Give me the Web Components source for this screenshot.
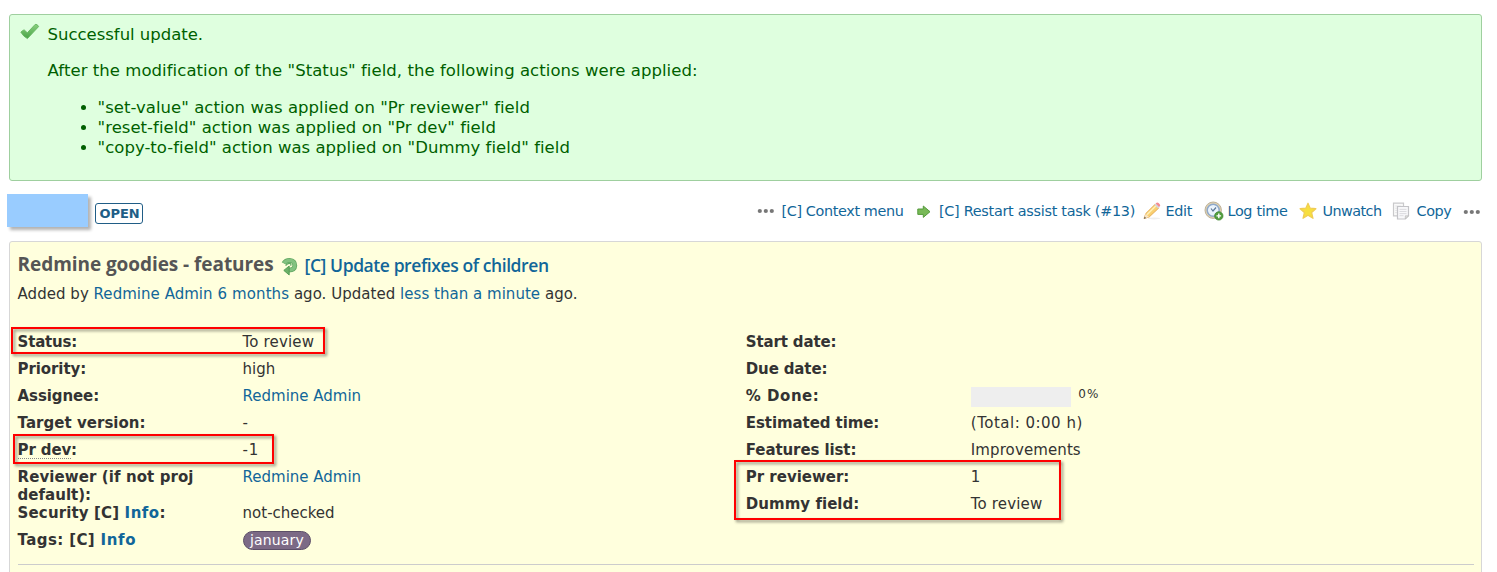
<!DOCTYPE html>
<html lang="en">
<head>
<meta charset="utf-8">
<title>Redmine goodies - features</title>
<style>
html,body{margin:0;background:#fff}
body{width:1497px;height:572px;overflow:hidden;font:15px/18px "DejaVu Sans",Verdana,sans-serif;color:#333}
</style>
</head>
<body>
<issue-page></issue-page>
<script>
const define = (name, html, init) => customElements.define(name, class extends HTMLElement {
  connectedCallback() {
    if (this.shadowRoot) return;
    const t = document.createElement('template');
    t.innerHTML = html;
    this.attachShadow({ mode: 'open' }).append(t.content.cloneNode(true));
    if (init) init(this, this.shadowRoot);
  }
});

// A run of text tracked to the measure given in "w".
define('ui-text', `<style>:host{display:inline-block;white-space:pre}:host([link]){color:#169}</style><slot></slot>`, el => {
  const w = parseFloat(el.getAttribute('w'));
  if (!w) return;
  const natural = el.getBoundingClientRect().width;
  el.style.letterSpacing = ((w - natural) / el.textContent.length).toFixed(4) + 'px';
});

const icons = {
  check: `<svg width="20" height="18" viewBox="0 0 20 18"><defs><linearGradient id="g" x2="0" y2="1"><stop stop-color="#8ad07f"/><stop offset="1" stop-color="#49a447"/></linearGradient></defs><path d="M.9 9.2Q2.6 7 4.2 6.9L7.3 9.8 15.2 1.4Q17.4.9 18.6 3.6L7.4 15.6Q3.6 13.8.9 9.2Z" fill="url(#g)" stroke="#62b45c" stroke-width=".9" stroke-linejoin="round"/></svg>`,
  dots: `<svg width="18" height="6" viewBox="0 0 18 6"><g fill="#777"><circle cx="2.8" cy="3" r="2.1"/><circle cx="8.8" cy="3" r="2.1"/><circle cx="14.8" cy="3" r="2.1"/></g></svg>`,
  arrow: `<svg width="14" height="13" viewBox="0 0 14 13"><path d="M.8 4H6.3V1L13 6.7 6.3 12.4V9.4H.8Z" fill="#78b957" stroke="#569b3d" stroke-width="1" stroke-linejoin="round"/></svg>`,
  pencil: `<svg width="18" height="18" viewBox="0 0 18 18"><ellipse cx="11" cy="16.4" rx="6" ry="1" fill="#eee"/><path d="M1 16.6 2.8 11.5 12 2.4 15.8 6 6.2 15Z" fill="#f9cf70" stroke="#e3a84f" stroke-width=".9"/><path d="M4 12.6 13 3.8" stroke="#fff0b5" stroke-width="1.5"/><path d="M1 16.6 2.8 11.5 4 13.2 6.2 15Z" fill="#f7e4c7"/><path d="m.9 16.8.8-2.1 1.3 1.2Z" fill="#444"/><path d="m11.4 2.8 1.4-1.4 4 3.6-1.5 1.5Z" fill="#d2d6de"/><path d="m12.6 1.6 1-.9q1-.6 2 .3l1.3 1.4q.8 1 0 1.7l-.8 1Z" fill="#f48b91"/></svg>`,
  clock: `<svg width="20" height="20" viewBox="0 0 20 20"><circle cx="9.2" cy="9.2" r="8.2" fill="#e2d3b0" stroke="#bdb19a" stroke-width="1"/><circle cx="9.2" cy="9.2" r="6" fill="#eaf3fc" stroke="#8fa9cb" stroke-width="1.5"/><path d="M7 7.5 9 10 12 6.5" fill="none" stroke="#5c7899" stroke-width="1.2"/><circle cx="14.8" cy="14.9" r="4.2" fill="#519d3d" stroke="#3c832e" stroke-width=".7"/><path d="M14.8 12.6v4.6M12.5 14.9h4.6" stroke="#fff" stroke-width="1.4"/></svg>`,
  star: `<svg width="18" height="18" viewBox="0 0 18 18"><path d="m9 1.2 2.2 5 5.7.5-4.3 3.8 1.4 5.8L9 13.2 4 16.3l1.4-5.8L1.1 6.7l5.7-.5Z" fill="#f7df3e" stroke="#f0cc55" stroke-width="1.2" stroke-linejoin="round"/></svg>`,
  copy: `<svg width="18" height="18" viewBox="0 0 18 18"><path d="M1.5 1.2h10v12.6h-10Z" fill="#fafafa" stroke="#c9c9cb" stroke-width="1.2"/><path d="M3.2 4h6M3.2 6.2h6M3.2 8.4h6M3.2 10.6h6" stroke="#dedee1" stroke-width=".8"/><path d="M5.5 4.5h11v9.3l-3.2 3.2H5.5Z" fill="#f8f8fa" stroke="#c3c3c7" stroke-width="1.2"/><path d="M7.5 7.4h7M7.5 9.5h7M7.5 11.6h7M7.5 13.7h4" stroke="#d8d8dc" stroke-width=".9"/><path d="M16.5 13.8h-3.2V17Z" fill="#ddd" stroke="#bbb" stroke-width=".7"/></svg>`,
  reload: `<svg width="18" height="19" viewBox="0 0 18 19"><path d="M2.8 6.4Q4.6 3.3 8.6 3.3 13.8 3.6 13.8 8.6 13.6 12.9 7.6 13.2" fill="none" stroke="#62a862" stroke-width="4.8"/><path d="M3 6.2Q4.8 3.3 8.6 3.3 13.8 3.6 13.8 8.6 13.6 12.9 7.6 13.2" fill="none" stroke="#83c280" stroke-width="3.2"/><path d="M2.8 13.4 8.2 9V18Z" fill="#6cb168" stroke="#4f9a50" stroke-width=".9" stroke-linejoin="round"/><path d="M4.6 8.6Q6.8 6 8.8 6.4 10.6 7 9.6 8.8" fill="none" stroke="#5fa962" stroke-width="1.2"/></svg>`
};
define('ui-icon', `<style>:host{display:block;flex:none}svg{display:block}</style>`, (el, root) => {
  const t = document.createElement('template');
  t.innerHTML = icons[el.getAttribute('name')];
  root.append(t.content);
});

define('flash-notice', `<style>
:host{display:flex;box-sizing:border-box;height:167px;margin:14px 15px 0 9px;border:1px solid #9fcf9f;border-radius:3px;background:#dfffdf;color:#005f00;font-size:16.5px;line-height:20px;padding:10px 0 0 10px}
ui-icon{margin:-2px 7.6px 0 0}
p{margin:0 0 16px;height:20px}ul{margin:17px 0 0;padding:0 0 0 50px}li{height:20px}
</style><ui-icon name="check"></ui-icon><div>
<p><ui-text w="155.5">Successful update.</ui-text></p>
<p><ui-text w="650">After the modification of the "Status" field, the following actions were applied:</ui-text></p>
<ul><li><ui-text w="432.3">"set-value" action was applied on "Pr reviewer" field</ui-text></li>
<li><ui-text w="398.3">"reset-field" action was applied on "Pr dev" field</ui-text></li>
<li><ui-text w="472.3">"copy-to-field" action was applied on "Dummy field" field</ui-text></li></ul></div>`);

define('status-badge', `<style>:host{display:block;box-sizing:border-box;height:21px;width:48px;border:1px solid #205d86;border-radius:3px;color:#205d86;font-weight:bold;font-size:13px;line-height:19px;padding-left:3.5px}</style><slot></slot>`);

define('tool-link', `<style>:host{display:flex;align-items:center;height:20px;color:#169;font-size:14.4px;line-height:18px}ui-icon{margin-right:var(--gap,6px)}</style><ui-icon></ui-icon><slot></slot>`, (el, root) => {
  const i = document.createElement('ui-icon');
  i.setAttribute('name', el.getAttribute('icon'));
  root.querySelector('ui-icon').replaceWith(i);
});

define('issue-toolbar', `<style>
:host{display:flex;height:60px}
.mask{width:81px;height:33px;margin:13px 0 0 7px;background:#9cf;box-shadow:3px 3px 3px rgba(0,0,0,.3)}
status-badge{margin:22px 0 0 7px}
nav{display:flex;margin:20px 16.5px 0 auto;height:20px}
</style><div class="mask"></div><status-badge><ui-text w="40">OPEN</ui-text></status-badge>
<nav>
<tool-link icon="dots" style="--gap:7px"><ui-text w="122">[C] Context menu</ui-text></tool-link>
<tool-link icon="arrow" style="--gap:8px;margin-left:13.5px"><ui-text w="196">[C] Restart assist task (#13)</ui-text></tool-link>
<tool-link icon="pencil" style="--gap:5px;margin-left:7.5px"><ui-text w="26.5">Edit</ui-text></tool-link>
<tool-link icon="clock" style="--gap:4px;margin-left:11.5px"><ui-text w="60">Log time</ui-text></tool-link>
<tool-link icon="star" style="--gap:6px;margin-left:11px"><ui-text w="59">Unwatch</ui-text></tool-link>
<tool-link icon="copy" style="--gap:7px;margin-left:10px"><ui-text w="35">Copy</ui-text></tool-link>
<ui-icon name="dots" style="margin:8px 0 0 11px"></ui-icon>
</nav>`);

define('issue-row', `<style>
:host{display:grid;grid-template-columns:225px 1fr;min-height:27px;line-height:18px}
:host([tall]){min-height:36px}
.label{font-weight:bold}
</style><div class="label"><slot name="label"></slot></div><div><slot></slot></div>`);

define('progress-bar', `<style>:host{display:flex}i{width:100px;height:20px;background:#eee;margin:0 7px 0 .4px}span{font-size:12px;line-height:14px}</style><i></i><span><ui-text w="21.5">0%</ui-text></span>`);
define('tag-pill', `<style>:host{display:inline-block;box-sizing:border-box;width:68px;height:19px;border:1px solid #5c4f68;border-radius:10px;background:#7c6a86;color:#fff;font-size:14px;line-height:17px;padding-left:6px;margin:-.5px 0 0 .4px;vertical-align:top}</style><slot></slot>`);
define('mark-box', `<style>:host{display:block;position:absolute;box-sizing:border-box;border:2px solid #f00;filter:drop-shadow(2px 2px 1.5px rgba(0,0,0,.45))}</style>`);

const row = (label, lw, value = '', vw = 0, link = '') =>
  `<issue-row><ui-text slot="label" w="${lw}">${label}</ui-text>${value && `<ui-text w="${vw}" ${link}>${value}</ui-text>`}</issue-row>`;

define('issue-details', `<style>
:host{display:block;box-sizing:border-box;height:345px;margin:0 15px 0 9px;border:1px solid #d7d7d7;border-radius:3px;background:#ffffdd;padding:10px 7px 0 7.6px}
h3{display:flex;margin:0;height:25px;font:700 19px/25px "Open Sans","Noto Sans",sans-serif;color:#555}
h3 ui-icon{margin:5px 6px 0 7px}
h3 ui-text[link]{font-size:17.5px;font-weight:600;padding-top:.5px}
.by{margin:8px 0 0;height:18px;line-height:18px}
.cols{display:grid;grid-template-columns:1fr 1fr;margin-top:30px;height:232px}
.cols{box-sizing:border-box;border-bottom:1px solid #ccc}
.dev{border-bottom:1px dotted #888;display:inline-block;height:17px}
</style>
<h3><ui-text w="256">Redmine goodies - features</ui-text><ui-icon name="reload"></ui-icon><ui-text link w="244">[C] Update prefixes of children</ui-text></h3>
<p class="by"><ui-text w="76">Added by </ui-text><ui-text link w="119">Redmine Admin</ui-text><ui-text w="5"> </ui-text><ui-text link w="71.5">6 months</ui-text><ui-text w="111">&nbsp;ago. Updated </ui-text><ui-text link w="140">less than a minute</ui-text><ui-text w="37.5">&nbsp;ago.</ui-text></p>
<div class="cols"><div>
${row('Status:', 59.5, 'To review', 71.5)}
${row('Priority:', 68.5, 'high', 32.5)}
${row('Assignee:', 81.5, 'Redmine Admin', 118.5, 'link')}
${row('Target version:', 128, '-', 7)}
<issue-row><span slot="label"><span class="dev"><ui-text w="53.5">Pr dev</ui-text></span><ui-text w="6">:</ui-text></span><ui-text w="16.5">-1</ui-text></issue-row>
<issue-row tall><span slot="label"><ui-text w="176">Reviewer (if not proj</ui-text><br><ui-text w="73.5">default):</ui-text></span><ui-text link w="118.5">Redmine Admin</ui-text></issue-row>
<issue-row><span slot="label"><ui-text w="107">Security [C] </ui-text><ui-text link w="35">Info</ui-text><ui-text w="6">:</ui-text></span><ui-text w="92">not-checked</ui-text></issue-row>
<issue-row><span slot="label"><ui-text w="83">Tags: [C] </ui-text><ui-text link w="35.5">Info</ui-text></span><tag-pill><ui-text w="54">january</ui-text></tag-pill></issue-row>
</div><div>
${row('Start date:', 90.5)}
${row('Due date:', 81.5)}
<issue-row><ui-text slot="label" w="73.5">% Done:</ui-text><progress-bar></progress-bar></issue-row>
${row('Estimated time:', 133.5, '(Total: 0:00 h)', 112)}
${row('Features list:', 110.5, 'Improvements', 110)}
${row('Pr reviewer:', 103.5, '1', 9)}
${row('Dummy field:', 113, 'To review', 71.5)}
</div></div>`);

define('issue-page', `<style>:host{display:flow-root;position:relative;width:1497px;height:572px;overflow:hidden}</style>
<flash-notice></flash-notice><issue-toolbar></issue-toolbar><issue-details></issue-details>
<mark-box style="left:11px;top:327px;width:314px;height:27px"></mark-box>
<mark-box style="left:13px;top:434px;width:261px;height:30px"></mark-box>
<mark-box style="left:734px;top:460px;width:327px;height:60px"></mark-box>`);
</script>
</body>
</html>
